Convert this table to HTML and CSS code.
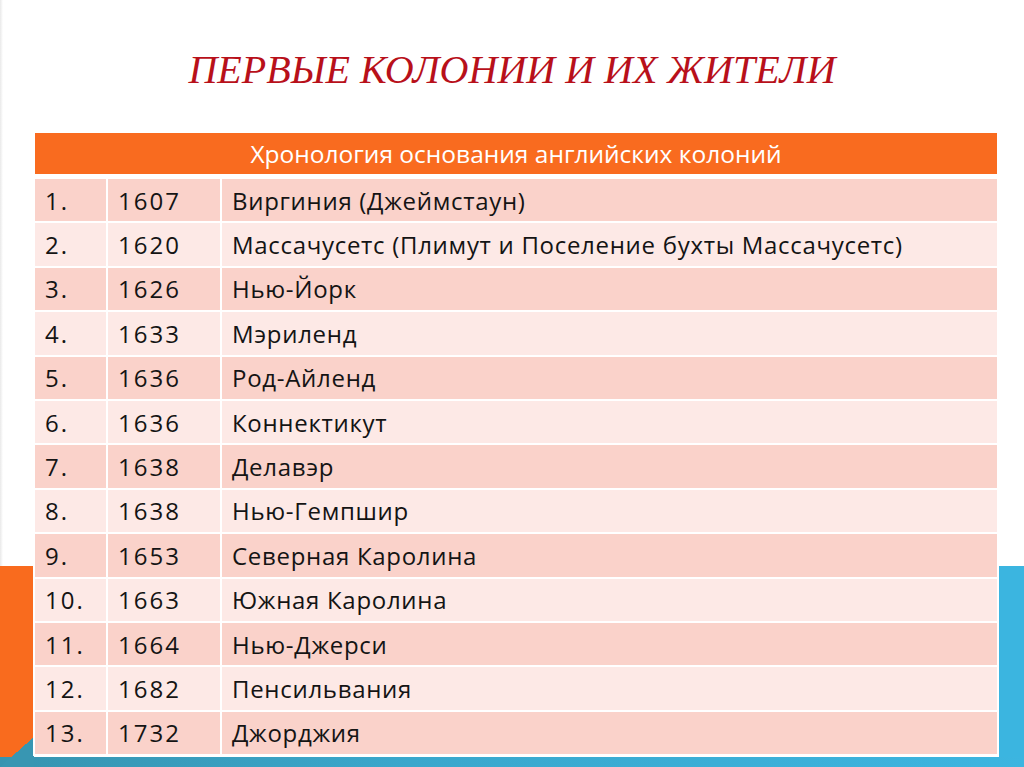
FILE: index.html
```html
<!DOCTYPE html>
<html lang="ru">
<head>
<meta charset="utf-8">
<title>Первые колонии и их жители</title>
<link rel="stylesheet" href="styles.css">
</head>
<body>
<div class="slide">
  <h1 class="title">ПЕРВЫЕ КОЛОНИИ И ИХ ЖИТЕЛИ</h1>
  <div class="table">
    <div class="head">Хронология основания английских колоний</div>
    <div class="rows">
      <div class="row odd"><div class="c num">1.</div><div class="c num">1607</div><div class="c name">Виргиния (Джеймстаун)</div></div>
      <div class="row even"><div class="c num">2.</div><div class="c num">1620</div><div class="c name">Массачусетс (Плимут и Поселение бухты Массачусетс)</div></div>
      <div class="row odd"><div class="c num">3.</div><div class="c num">1626</div><div class="c name">Нью-Йорк</div></div>
      <div class="row even"><div class="c num">4.</div><div class="c num">1633</div><div class="c name">Мэриленд</div></div>
      <div class="row odd"><div class="c num">5.</div><div class="c num">1636</div><div class="c name">Род-Айленд</div></div>
      <div class="row even"><div class="c num">6.</div><div class="c num">1636</div><div class="c name">Коннектикут</div></div>
      <div class="row odd"><div class="c num">7.</div><div class="c num">1638</div><div class="c name">Делавэр</div></div>
      <div class="row even"><div class="c num">8.</div><div class="c num">1638</div><div class="c name">Нью-Гемпшир</div></div>
      <div class="row odd"><div class="c num">9.</div><div class="c num">1653</div><div class="c name">Северная Каролина</div></div>
      <div class="row even"><div class="c num">10.</div><div class="c num">1663</div><div class="c name">Южная Каролина</div></div>
      <div class="row odd"><div class="c num">11.</div><div class="c num">1664</div><div class="c name">Нью-Джерси</div></div>
      <div class="row even"><div class="c num">12.</div><div class="c num">1682</div><div class="c name">Пенсильвания</div></div>
      <div class="row odd"><div class="c num">13.</div><div class="c num">1732</div><div class="c name">Джорджия</div></div>
    </div>
  </div>
</div>
</body>
</html>
```

FILE: styles.css
```css
* { box-sizing: border-box; }
html, body { margin: 0; padding: 0; }
body { background: #fff; }

.slide {
  width: 1024px;
  height: 767px;
  overflow: hidden;
  display: flex;
  flex-direction: column;
  background-color: #fff;
  background-image:
    linear-gradient(to bottom right, rgba(0,0,0,0) 50%, #3896b2 50%),
    linear-gradient(90deg, #3794b0 0%, #3aa7cc 40%, #3cb5e0 100%),
    linear-gradient(#f96b1e, #f96b1e),
    linear-gradient(#3bb5e0, #3bb5e0),
    linear-gradient(90deg, #e9e9e9, #fff);
  background-size: 34px 30px, 1024px 10px, 34px 201px, 25px 201px, 3px 767px;
  background-position: 0 737px, 0 757px, 0 566px, 999px 566px, 0 0;
  background-repeat: no-repeat;
}

.title {
  margin: 47px 0 0 0;
  height: 46px;
  line-height: 46px;
  text-align: center;
  font-family: "Liberation Serif", "Times New Roman", serif;
  font-style: italic;
  font-weight: normal;
  font-size: 40px;
  color: #b8101a;
}

.table {
  margin: 38px 0 0 33px;
  width: 966px;
  background: #fff;
  padding: 2px;
  font-family: "Open Sans", "Liberation Sans", Arial, sans-serif;
  font-size: 24px;
  color: #141414;
}

.head {
  height: 41px;
  background: #f96b1f;
  color: #fff;
  text-align: center;
  line-height: 41px;
  font-size: 24.5px;
  font-weight: 500;
}

.rows {
  margin-top: 5px;
  display: flex;
  flex-direction: column;
  gap: 2px;
}

.row {
  display: grid;
  grid-template-columns: 71px 112px 1fr;
  column-gap: 2px;
  height: 42.4px;
}

.c {
  padding-left: 10px;
  display: flex;
  align-items: center;
  white-space: nowrap;
}

.num { letter-spacing: 2px; }
.name { letter-spacing: 0.7px; }

.odd .c { background: #fad2ca; }
.even .c { background: #fde9e6; }
```
